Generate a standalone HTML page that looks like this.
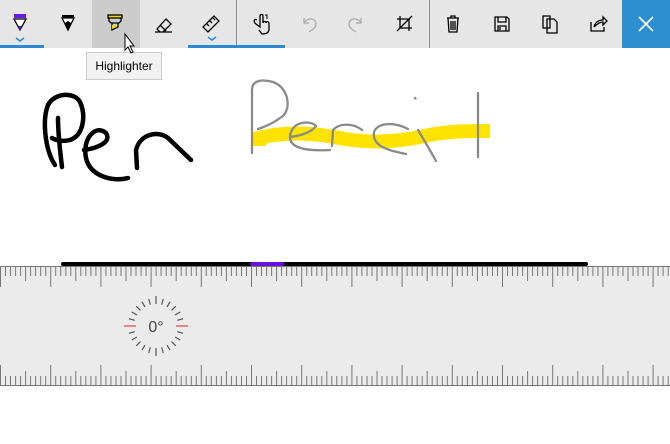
<!DOCTYPE html>
<html><head><style>
body{margin:0;width:670px;height:444px;overflow:hidden;background:#fff;font-family:"Liberation Sans",sans-serif;position:relative}
.tb{position:absolute;left:0;top:0;width:670px;height:48px;background:#e6e6e6}
.b{position:absolute;top:0;width:48px;height:48px}
.ul{position:absolute;top:45px;height:3px;background:#2a8ad4}
.div{position:absolute;top:0;width:1px;height:48px;background:#8a8a8a}
.tip{position:absolute;left:86px;top:52px;width:76px;height:28px;background:#f2f2f2;border:1px solid #ccc;box-sizing:border-box;font-size:12px;line-height:26px;text-align:center;color:#000}
</style></head><body>
<div class="tb">
 <div class="b" style="left:92px;background:#cccccc"></div>
 <div class="b" style="left:622px;background:#2b8fd0"></div>
 <svg width="670" height="48" style="position:absolute;left:0;top:0" fill="none" stroke="#000" stroke-width="1.3">
  <rect x="14" y="14" width="12" height="4" fill="#6a1de0" stroke="none"/>
  <path d="M14 19 L20 30 L26 19 Z" fill="#fff"/><path d="M18.5 26 L20 31 L21.5 26 Z" fill="#6a1de0" stroke="none"/>
  <path d="M16 38 l4 3 l4 -3" stroke="#2a8ad4" stroke-width="1.5"/>
  <rect x="62" y="15" width="12" height="3" fill="#000" stroke="none"/>
  <path d="M62 18 L68 30 L74 18 Z" fill="#fff"/><path d="M65 23 L68 30 L71 23 L68 21Z" fill="#000" stroke="none"/>
  <rect x="108" y="15" width="14" height="3" fill="#e8dc00" stroke="#000"/>
  <path d="M109 18 L109 21 L111 23 L119 23 L121 21 L121 18 M112 23 L112 30 L118 27 L118 23"/>
  <path d="M112 25 L117 25 L117 27 L112 29Z" fill="#e8dc00" stroke="none"/>
  <path d="M157 29 L166 19 L171 24 L163 32 L160 32 Z M160 25 L166 31 M155 32 L172 32"/>
  <path d="M203 27 L214 16 L219 21 L208 32 Z M207 24 l2 2 M210 21 l2 2 M213 18 l2 2"/>
  <path d="M208 37 l4 3 l4 -3" stroke="#2a8ad4" stroke-width="1.5"/>
  <path d="M257 20 C254 18 253 22 256 24 L260 27 L260 16 C260 14 263 14 263 16 L263 23 C263 21 266 21 266 23 C266 21 269 21 269 24 L269 29 C269 33 266 34 262 34 L259 30"/>
  <path d="M265 15 l2 0 l0 4" stroke-width="1"/>
  <path d="M304 18 L304 23 L309 23 M304 23 C307 17 316 18 316 24 C316 28 312 30 309 32" stroke="#aaa"/>
  <path d="M361 18 L361 23 L356 23 M361 23 C358 17 349 18 349 24 C349 28 353 30 356 32" stroke="#aaa"/>
  <path d="M397 19 L409 19 L409 31 M400 16 L400 28 L412 28 M397 31 L412 16"/>
  <path d="M447 18 L459 18 M451 18 L451 16 L455 16 L455 18 M448 18 L449 32 L457 32 L458 18 M451 21 L451 30 M453 21 L453 30 M455 21 L455 30"/>
  <path d="M495 17 L507 17 L509 19 L509 31 L495 31 Z M498 17 L498 22 L506 22 L506 17 M498 31 L498 26 L506 26 L506 31 M500 27 L500 30"/>
  <path d="M543 16 L550 16 L550 28 L543 28 Z M547 19 L554 19 L557 22 L557 33 L547 33 Z"/>
  <path d="M591 22 L591 31 L604 31 L604 27 M594 27 C595 22 599 20 603 20 L603 17 L607 21 L603 25 L603 22 C600 22 597 24 594 27"/>
  <path d="M639 17 L653 31 M653 17 L639 31" stroke="#fff" stroke-width="1.6"/>
 </svg>
 <div class="div" style="left:236px"></div>
 <div class="div" style="left:429px"></div>
 <div class="ul" style="left:0;width:44px"></div>
 <div class="ul" style="left:188px;width:97px"></div>
</div>
<div class="tip">Highlighter</div>
<svg width="670" height="444" style="position:absolute;left:0;top:0" fill="none">
 <path d="M125 34 L125 50 L128 47 L131 53 L133 52 L130 46 L134 46 Z" fill="#fff" stroke="#000" stroke-width="1"/>
 <path d="M259 146 L259 138 C290 130 320 134 345 139 C370 143 395 142 420 137 C445 131 465 131 490 131" stroke="#ffe300" stroke-width="14"/>
 <g stroke="#8a8a8a" stroke-width="2.3" stroke-linecap="round" stroke-linejoin="round">
  <path d="M252 153 L252 90 C252 80 262 79 273 82 C290 88 292 112 280 118 C272 124 264 127 258 129"/>
  <path d="M290 137 C300 136 312 132 316 126 C310 120 296 122 292 130 C286 142 292 152 330 150"/>
  <path d="M332 146 L333 130 C340 122 355 124 362 130"/>
  <path d="M408 129 C395 122 378 122 374 132 C372 145 385 150 406 154"/>
  <path d="M418 130 C424 140 430 150 436 161"/>
  <path d="M415 98 l0.5 0.5"/>
  <path d="M478 93 L478 157"/>
 </g>
 <g stroke="#000" stroke-width="4.5" stroke-linecap="round" stroke-linejoin="round">
  <path d="M58 118 C58 135 60 150 62 167"/>
  <path d="M55 165 C45 150 42 120 48 105 C55 92 75 92 80 102 C86 115 84 135 70 140 C62 142 55 140 52 138"/>
  <path d="M84 150 C98 148 112 142 106 133 C96 124 82 138 86 158 C90 176 112 182 128 178"/>
  <path d="M137 168 L136 150 C140 134 158 130 168 138 L191 160"/>
 </g>
</svg>
<svg width="670" height="125" style="position:absolute;left:0;top:262px">
 <rect x="0" y="4" width="670" height="120" fill="#ebebeb"/>
 <line x1="0" y1="4.5" x2="670" y2="4.5" stroke="#777" stroke-width="1"/>
 <line x1="0" y1="123.5" x2="670" y2="123.5" stroke="#777" stroke-width="1"/>
 <g stroke="#777" stroke-width="1" id="ticks"></g>
 <path d="M63 2 L586 2" stroke="#000" stroke-width="4" stroke-linecap="round"/>
 <path d="M252 2 L282 2" stroke="#6a10d8" stroke-width="4" stroke-linecap="round"/>
</svg>
<svg width="80" height="80" style="position:absolute;left:116px;top:286px" id="dial">
 <text x="40" y="46" font-size="16" font-family="Liberation Sans" fill="#444" text-anchor="middle">0°</text>
</svg>
<script>
var g=document.getElementById('ticks'),s='';
for(var i=0;i<134;i++){var k=i%10==0?20:(i%5==0?14:9);
var xx=(5.02*i+0.5).toFixed(1);s+='<line x1="'+xx+'" y1="5" x2="'+xx+'" y2="'+(5+k)+'"/><line x1="'+xx+'" y1="123" x2="'+xx+'" y2="'+(123-k)+'"/>';}
g.innerHTML=s;
var d=document.getElementById('dial'),t='';
for(var a=0;a<360;a+=15){var r=a*Math.PI/180,c=Math.cos(r),n=Math.sin(r);var r1=22,r2=(a%90==0)?30:28;var col='#555',w=1.2;
if(a==0||a==180){col='#e84040';r1=20;r2=32;}
t+='<line x1="'+(40+c*r1)+'" y1="'+(40+n*r1)+'" x2="'+(40+c*r2)+'" y2="'+(40+n*r2)+'" stroke="'+col+'" stroke-width="'+w+'"/>';}
d.innerHTML+=t;
</script>
</body></html>
